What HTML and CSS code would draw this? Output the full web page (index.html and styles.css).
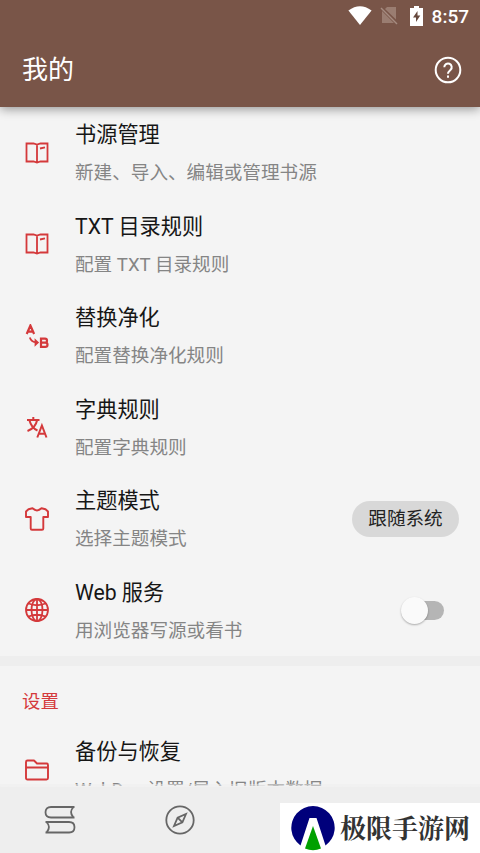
FILE: index.html
```html
<!DOCTYPE html>
<html lang="zh-CN">
<head>
<meta charset="utf-8">
<title>我的</title>
<link rel="stylesheet" href="styles.css">
</head>
<body>
<div class="app">
  <header class="header">
    <div class="status">
      <svg class="wifi" width="24" height="20" viewBox="0 0 24 20"><path d="M.4 4.5Q12-4 23.600 4.500L12 19Z" fill="#fff"/></svg>
      <svg class="sim" width="19" height="20" viewBox="0 0 19 20"><path d="M7 1h9v12.500L5 3zM2 5l12 12H2z" fill="#9a7d71"/><path d="M1 2l16 16" stroke="#a58b80" stroke-width="1.500"/></svg>
      <svg class="battery" width="13" height="20" viewBox="0 0 13 20"><path d="M4 0h5v2h4v18H0V2h4z" fill="#fff"/><path d="M7.500 5L3 11.500h3V16l4.300-6.500H7.500z" fill="#66483d"/></svg>
      <span class="clock">8:57</span>
    </div>
    <div class="toolbar">
      <h1>我的</h1>
      <svg width="28" height="28" viewBox="0 0 28 28" fill="none" stroke="#fff" stroke-width="2"><circle cx="14" cy="14" r="12.300"/><path d="M10.300 11.200a3.700 3.700 0 1 1 6.300 2.600c-1.500 1.400-2.600 2-2.600 4"/><path d="M14 19.600v2.200"/></svg>
    </div>
  </header>
  <main class="content">
    <section class="row">
      <svg class="icon" viewBox="0 0 24 24"><path d="M1.500 2.500h7L12 3.500l3.500-1h7v18h-7L12 21.500l-3.500-1h-7zM12 3.500v18M15 7.500l5-1.200"/></svg>
      <div class="text"><h2>书源管理</h2><p>新建、导入、编辑或管理书源</p></div>
    </section>
    <section class="row">
      <svg class="icon" viewBox="0 0 24 24"><path d="M1.500 2.500h7L12 3.500l3.500-1h7v18h-7L12 21.500l-3.500-1h-7zM12 3.500v18M15 7.500l5-1.200"/></svg>
      <div class="text"><h2>TXT 目录规则</h2><p>配置 TXT 目录规则</p></div>
    </section>
    <section class="row">
      <svg class="icon" viewBox="0 0 24 24"><path stroke-width="2.200" d="M1.700 10L5.400 1.500 9.100 10M3 7.600h4.800M16 14.700h4q2 0 2 2t-2 2h-4zM16 18.700h4.300q2.200 0 2.200 2.100t-2.200 2.100H16z"/><path d="M4.800 13.500q1.500 4.700 6.500 4.900M10.500 16.300l2.300 2.200-2.300 2.200z"/></svg>
      <div class="text"><h2>替换净化</h2><p>配置替换净化规则</p></div>
    </section>
    <section class="row">
      <svg class="icon" viewBox="0 0 24 24"><path stroke-width="2" d="M2 5h12.500M8.300 2v3M4.500 5.500Q6.500 13 12.500 15.500M12 5.500Q10.500 13 2.500 16M12.300 22.500L16.900 10.500l4.600 12M13.800 18.800h6.200"/></svg>
      <div class="text"><h2>字典规则</h2><p>配置字典规则</p></div>
    </section>
    <section class="row">
      <svg class="icon" viewBox="0 0 24 24"><path stroke-width="1.900" stroke-linejoin="round" d="M7.500 1.300Q12 5.500 16.500 1.300L20.500 2.200 23 4.500V10H18.300V21.500q0 1.300-1.300 1.300H7q-1.300 0-1.300-1.300V10H1V4.500L3.500 2.200z"/></svg>
      <div class="text"><h2>主题模式</h2><p>选择主题模式</p></div>
      <span class="chip">跟随系统</span>
    </section>
    <section class="row">
      <svg class="icon" viewBox="0 0 24 24"><circle cx="12" cy="12" r="11"/><ellipse cx="12" cy="12" rx="5.500" ry="11"/><path d="M12 1v22M1 12h22M3.500 5.500Q12 9 20.500 5.500M3.500 18.500Q12 15 20.500 18.500"/></svg>
      <div class="text"><h2>Web 服务</h2><p>用浏览器写源或看书</p></div>
      <span class="switch"></span>
    </section>
    <div class="divider"></div>
    <h3 class="group">设置</h3>
    <section class="row">
      <svg class="icon" viewBox="0 0 24 24"><path stroke-width="1.900" stroke-linejoin="round" d="M1 20V4q0-1.500 1.500-1.500H9l3 3h9.500Q23 5.500 23 7v13q0 1.500-1.500 1.500h-19Q1 21.500 1 20zM1 9.500h22"/></svg>
      <div class="text"><h2>备份与恢复</h2><p>WebDav 设置/导入旧版本数据</p></div>
    </section>
  </main>
  <nav class="nav">
    <span class="tab"><svg width="32" height="30" viewBox="0 0 32 30" fill="none" stroke="#666" stroke-width="1.800"><path d="M30.500 2H7Q1.500 2 1.500 7.200T7 12.500h23.500M29.500 2q-5 5.200 0 10.500M1.500 17H25q5.500 0 5.500 5.300T25 27.500H1.500M2.500 17q5 5.200 0 10.500"/></svg></span>
    <span class="tab"><svg width="30" height="30" viewBox="0 0 30 30" fill="none" stroke="#666" stroke-width="1.800"><circle cx="15" cy="15" r="13.700"/><path d="M21 9l-3.600 8.400L9 21l3.600-8.400zM12.600 12.600l4.800 4.800"/></svg></span>
  </nav>
  <div class="brand">
    <svg width="44" height="45" viewBox="0 0 44 45"><path d="M9.500 39.500A21.700 21.700 0 1 1 34.500 39.500L25.500 12h-7z" fill="#00007b"/><path d="M22 20l8 22.500q-8 3.500-16 0z" fill="#00a000"/></svg>
    <span>极限手游网</span>
  </div>
</div>
</body>
</html>
```
FILE: styles.css
```css
* { box-sizing: border-box; }
body {
  margin: 0;
  font-family: Roboto, "Noto Sans CJK SC", sans-serif;
  background: #f4f4f4;
}
h1, h2, h3, p { margin: 0; font-weight: 400; white-space: nowrap; }
svg { display: block; flex: none; }
.app {
  position: relative;
  width: 480px;
  height: 853px;
  overflow: hidden;
  display: flex;
  flex-direction: column;
}
.header {
  position: relative;
  flex: none;
  height: 107px;
  background: #795548;
  color: #fff;
  box-shadow: 0 2px 10px rgba(0, 0, 0, .4);
}
.status {
  height: 32px;
  display: flex;
  align-items: center;
  justify-content: flex-end;
  padding-right: 11px;
}
.sim { margin-left: 8px; }
.battery { margin-left: 11px; }
.clock { margin-left: 9px; padding-top: 1px; font-size: 19px; line-height: 32px; font-weight: 500; }
.toolbar {
  height: 75px;
  display: flex;
  align-items: center;
  justify-content: space-between;
  padding: 0 18px 0 22px;
}
.toolbar h1 { padding-top: 1px; font-size: 26px; line-height: 36px; }
.content { flex: 1; min-height: 0; overflow: hidden; }
.row {
  display: flex;
  align-items: center;
  height: 91.5px;
  padding-left: 25px;
}
.icon {
  width: 24px;
  height: 24px;
  fill: none;
  stroke: #d4393b;
  stroke-width: 1.8;
}
.text { flex: 1; margin-left: 26px; padding-top: 3px; }
.text h2 { font-size: 21.2px; line-height: 38px; color: #161616; }
.text p { font-size: 18.6px; line-height: 38px; color: #858585; }
.chip {
  width: 107px;
  height: 36px;
  margin-right: 21px;
  border-radius: 18px;
  background: #d8d8d8;
  color: #222;
  font-size: 18.6px;
  line-height: 36px;
  text-align: center;
}
.switch {
  display: flex;
  align-items: center;
  width: 39px;
  height: 19px;
  margin-right: 36px;
  border-radius: 10px;
  background: #b5b5b5;
}
.switch::before {
  content: "";
  flex: none;
  width: 27px;
  height: 27px;
  margin-left: -4px;
  border-radius: 50%;
  background: #fafafa;
  box-shadow: 0 1px 2px rgba(0, 0, 0, .3);
}
.divider { height: 10px; background: #eee; }
.group { height: 58px; padding: 18px 22px 0; font-size: 18.4px; line-height: 36px; color: #d4393b; }
.nav {
  position: relative;
  flex: none;
  height: 69px;
  margin-top: -2px;
  padding-top: 2px;
  display: flex;
  background: linear-gradient(rgba(238, 238, 238, .5) 3px, #eee 3px);
}
.tab { width: 120px; display: flex; align-items: center; justify-content: center; }
.brand {
  position: absolute;
  right: 0;
  bottom: 0;
  width: 200px;
  height: 50px;
  padding-left: 11px;
  display: flex;
  align-items: center;
  background: #fff;
  color: #333;
  font-family: "Noto Serif CJK SC", "Noto Sans CJK SC", serif;
  font-size: 26px;
  line-height: 36px;
  font-weight: 700;
  white-space: nowrap;
}
.brand span { margin: -3px 0 0 5px; }
```
